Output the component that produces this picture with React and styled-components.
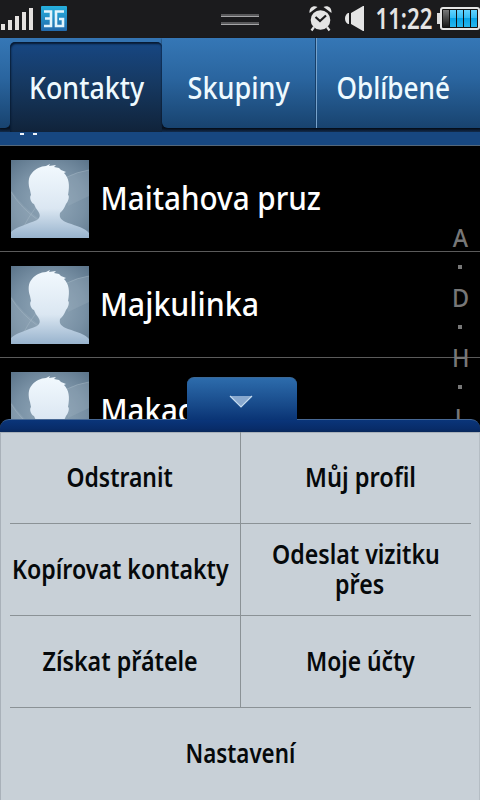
import React, { useLayoutEffect, useRef, useState } from "react";
import styled, { createGlobalStyle } from "styled-components";

const Global = createGlobalStyle`
  *, *::before, *::after { box-sizing: border-box; }
  html, body { margin: 0; padding: 0; background: #000; overflow: hidden; }
  body { font-family: "Noto Sans", "Open Sans", sans-serif; }
`;

const Screen = styled.main`
  position: relative;
  width: 480px;
  height: 800px;
  overflow: hidden;
  background: #000;
  display: flex;
  flex-direction: column;
`;

/* Condensed label: squeezes its glyphs to a given line width. */
const FitBox = styled.span`
  display: flex;
  justify-content: center;
  flex: none;
  width: ${(p) => p.$w}px;
  margin-right: ${(p) => p.$after || 0}px;
  white-space: nowrap;
`;
const FitText = styled.span`
  display: block;
  flex: none;
  transform-origin: center;
`;

function Fit({ w, after, children }) {
  const ref = useRef(null);
  const [scale, setScale] = useState(1);
  useLayoutEffect(() => {
    setScale(w / ref.current.offsetWidth);
  }, [w, children]);
  return (
    <FitBox $w={w} $after={after}>
      <FitText ref={ref} style={{ transform: `scaleX(${scale})` }}>
        {children}
      </FitText>
    </FitBox>
  );
}

const StatusBar = styled.header`
  flex: none;
  height: 38px;
  background: #1b1b1d;
  color: #e4e4e4;
  display: grid;
  grid-template-columns: 221px 38px 1fr;
`;
const StatusLeft = styled.div`
  display: flex;
  gap: 8px;
  padding: 6px 0 0 1px;
`;
const Grip = styled.div`
  margin-top: 14px;
  height: 11px;
  background: linear-gradient(
    #59595b 0 2px, #a5a5a7 2px 3px, #1b1b1d 3px 8px, #59595b 8px 10px, #a5a5a7 10px 11px
  );
`;
const StatusRight = styled.div`
  display: flex;
  padding-left: 50px;
`;
const AlarmIcon = styled.svg`
  flex: none;
  margin-top: 5px;
`;
const SpeakerIcon = styled.svg`
  flex: none;
  margin: 5px 0 0 12px;
`;
const BatteryIcon = styled.svg`
  flex: none;
  margin: 6px 0 0 5px;
`;
const Clock = styled.time`
  margin-left: 10px;
  width: 57px;
  font-size: 28px;
  font-weight: 600;
  line-height: 37px;
`;

const Tabs = styled.nav`
  flex: none;
  height: 94px;
  display: flex;
  align-items: flex-start;
  background: linear-gradient(#163f72 0, #091a30 88px, #071220 90px, #122b4b 94px);
  color: #eefaff;
  font-size: 31px;
  font-weight: 500;
`;
const tabBlue = "linear-gradient(#3577b6, #2a659f 45%, #18436f)";
const TabEdge = styled.div`
  width: 10px;
  height: 90px;
  background: ${tabBlue};
  border-radius: 0 0 5px 0;
  box-shadow: 1px 1px 2px #06101d;
`;
const ActiveTab = styled.div`
  width: 152px;
  height: 94px;
  padding: 4px 0 0;
  background: #3474b2;
`;
const ActiveFace = styled.div`
  height: 90px;
  display: flex;
  justify-content: center;
  padding-left: 1px;
  border-radius: 5px 5px 0 0;
  background: linear-gradient(#174783, #163962 45%, #10233a);
  box-shadow: inset 1px 2px 2px #071a32;
  line-height: 90px;
`;
const TabGroup = styled.div`
  flex: 1;
  height: 90px;
  display: grid;
  grid-template-columns: 154px 1fr;
  background: ${tabBlue};
  border-radius: 0 0 0 6px;
  box-shadow: 0 1px 2px #050d18;
`;
const Tab = styled.div`
  height: 90px;
  display: flex;
  justify-content: ${(p) => (p.$last ? "flex-start" : "center")};
  padding-left: ${(p) => (p.$last ? "19px" : "0")};
  border-left: ${(p) => (p.$last ? "1px solid #77a3cc" : "0")};
  box-shadow: ${(p) => (p.$last ? "-1px 0 0 #173f69" : "none")};
  line-height: 98px;
`;

/* Section header that has scrolled up under the tabs; only the feet of its letter show. */
const Section = styled.div`
  flex: none;
  height: 14px;
  display: flex;
  gap: 9px;
  padding: 1px 0 0 20px;
  background: #174780;
  border-bottom: 1px solid #546779;
`;
const LetterFoot = styled.i`
  width: 4px;
  height: 2px;
  background: #eef4fa;
`;

const ListArea = styled.section`
  flex: 1;
  min-height: 0;
  display: grid;
  grid-template-columns: 100%;
  grid-auto-rows: 106px;
  align-content: start;
  overflow: hidden;
`;
const Row = styled.div`
  height: 106px;
  display: flex;
  padding: 14px 0 0 11px;
  gap: 11px;
  border-bottom: 1px solid #5b5b5b;
  color: #fff;
  font-size: 33px;
  font-weight: 500;
  line-height: 75px;
`;
const AvatarSvg = styled.svg`
  flex: none;
  width: 78px;
  height: 78px;
`;

const IndexBar = styled.aside`
  position: absolute;
  right: 0;
  top: 222px;
  width: 39px;
  display: flex;
  flex-direction: column;
  align-items: center;
  color: #777;
  font-size: 26px;
  font-weight: 500;
  line-height: 30px;
`;
const Letter = styled.span`
  height: 30px;
  transform: scaleX(0.9);
`;
const Dot = styled.i`
  width: 4px;
  height: 4px;
  margin: 13px 1px 13px 0;
  background: #777;
`;

const Sheet = styled.section`
  position: absolute;
  left: 0;
  top: 377px;
  width: 480px;
  height: 423px;
  display: flex;
  flex-direction: column;
`;
const Handle = styled.button`
  flex: none;
  appearance: none;
  margin: 0 0 0 187px;
  width: 110px;
  height: 43px;
  padding: 0;
  display: flex;
  justify-content: center;
  align-items: flex-start;
  border: 0;
  border-top: 1px solid #3b6997;
  border-radius: 7px 7px 0 0;
  background: linear-gradient(#2d6cac, #174989 65%, #0a3475);
  z-index: 1;
`;
const HandleIcon = styled.svg`
  margin: 17px 3px 0 0;
`;
const SheetEdge = styled.div`
  flex: none;
  margin-top: -1px;
  height: 13px;
  border-top: 1px solid #476894;
  border-radius: 9px 9px 0 0;
  background: linear-gradient(#0a357a, #082c69 75%, #09285a);
`;
const Menu = styled.div`
  flex: 1;
  display: grid;
  grid-template-columns: 230px 231px;
  grid-template-rows: 92px 92px 92px 92px;
  padding: 0 9px 0 10px;
  background: #c8d0d7;
  box-shadow: inset 1px 1px 0 #a9b1b9, inset -1px 0 0 #b5bdc4;
  color: #06090b;
  font-size: 27px;
  font-weight: 600;
  line-height: 30px;
`;
const MenuItem = styled.div`
  display: flex;
  flex-direction: column;
  align-items: center;
  justify-content: center;
  border-bottom: ${(p) => (p.$wide ? "0" : "1px solid #8b9296")};
  border-left: ${(p) => (p.$right ? "1px solid #8b9296" : "0")};
  grid-column: ${(p) => (p.$wide ? "1 / -1" : "auto")};
  padding: ${(p) => (p.$wide ? "0 1px 2px 0" : p.$right ? "0 0 2px 8px" : "0 10px 2px 0")};
`;

function Avatar() {
  return (
    <AvatarSvg viewBox="0 0 78 78">
      <defs>
        <radialGradient id="sky" cx="50%" cy="55%" r="75%">
          <stop offset="0" stopColor="#93a9ba" />
          <stop offset="0.6" stopColor="#7890a4" />
          <stop offset="1" stopColor="#5a7389" />
        </radialGradient>
        <linearGradient id="person" x1="0" y1="0" x2="0" y2="1">
          <stop offset="0" stopColor="#f2f9fe" />
          <stop offset="0.6" stopColor="#dbe7f2" />
          <stop offset="1" stopColor="#98b3cd" />
        </linearGradient>
      </defs>
      <rect width="78" height="78" fill="url(#sky)" />
      <path d="M0 30Q10 46 30 60L18 78H0ZM78 10Q66 11 54 18L57 46L78 36Z" fill="#a1b4c3" opacity=".28" />
      <path d="M0 32Q10 48 27 60M78 10Q66 12 56 17M25 47Q17 58 13 66" fill="none" stroke="#acbecb" strokeWidth=".8" opacity=".5" />
      <path
        d="M0 72C5 67 17 64 26 60C30 57 29 54 27 51C25 49 24 46 23 44C20 43 18 37 20 35L19 30C17 24 17 17 21 13C24 9 30 6 35 6L39 4L38 6L45 5L43 7L48 8L50 10L55 12L53 13C58 18 59 25 57 35C59 36 57 42 55 44C53 49 51 51 49 53C48 58 50 60 57 63C66 66 74 68 78 73V78H0Z"
        fill="url(#person)"
      />
    </AvatarSvg>
  );
}

function Alarm() {
  return (
    <AlarmIcon width="24" height="27" viewBox="0 0 24 27">
      <circle cx="11.500" cy="15" r="9.800" fill="#e4e4e4" />
      <path d="M0.500 8C0 3 4 0 8.500 2ZM22.500 8C23 3 19 0 14.500 2Z" fill="#e4e4e4" />
      <path d="M5 22L2.500 25.500M18 22L20.500 25.500" stroke="#e4e4e4" strokeWidth="2.2" />
      <path d="M6.500 12L11 16L17 10.500" fill="none" stroke="#1b1b1d" strokeWidth="2.2" />
    </AlarmIcon>
  );
}

const contacts = [
  { name: "Maitahova pruz", w: 221 },
  { name: "Majkulinka", w: 159 },
  { name: "Makac", w: 92 },
];

export default function App() {
  return (
    <>
      <Global />
      <Screen>
        <StatusBar>
          <StatusLeft>
            <svg width="32" height="26" viewBox="0 0 32 26" fill="#e4e1df">
              <rect x="0" y="18" width="4" height="6" />
              <rect x="7" y="14" width="4" height="10" />
              <rect x="14" y="10" width="4" height="14" />
              <rect x="21" y="6" width="4" height="18" />
              <rect x="28" y="2" width="4" height="22" />
            </svg>
            <svg width="26" height="26" viewBox="0 0 26 26">
              <defs>
                <linearGradient id="net" x1="0" y1="0" x2="0" y2="1">
                  <stop offset="0" stopColor="#25afdd" />
                  <stop offset="1" stopColor="#2369ab" />
                </linearGradient>
              </defs>
              <rect width="26" height="25" rx="1" fill="url(#net)" />
              <path d="M3 5.500H10V20H3M4 12.500H10M23 5.500H15V20H22V13H18" fill="none" stroke="#e2f3fb" strokeWidth="2.6" />
            </svg>
          </StatusLeft>
          <Grip />
          <StatusRight>
            <Alarm />
            <SpeakerIcon width="20" height="27" viewBox="0 0 20 27" fill="#e4e4e4">
              <path d="M4 8H3Q0 10 0 13.500Q0 17 3 19H4ZM6 8L18 1H19V26H18L6 19Z" />
            </SpeakerIcon>
            <Clock>
              <Fit w={57}>11:22</Fit>
            </Clock>
            <BatteryIcon width="43" height="25" viewBox="0 0 43 25">
              <defs>
                <linearGradient id="cell" x1="0" y1="0" x2="0" y2="1">
                  <stop offset="0" stopColor="#62d3ff" />
                  <stop offset="0.45" stopColor="#35bdf5" />
                  <stop offset="0.5" stopColor="#08a4e8" />
                  <stop offset="1" stopColor="#24b6ee" />
                </linearGradient>
                <linearGradient id="empty" x1="0" y1="0" x2="0" y2="1">
                  <stop offset="0" stopColor="#777" />
                  <stop offset="1" stopColor="#161616" />
                </linearGradient>
              </defs>
              <path d="M0 7H4V18H0Z" fill="#ddd" />
              <rect x="4" y="2" width="38" height="21" rx="2" fill="#111" stroke="#e5e5e5" strokeWidth="2" />
              <rect x="6" y="4" width="6" height="17" fill="url(#empty)" />
              <path d="M13 4H19V21H13ZM20 4H26V21H20ZM27 4H33V21H27ZM34 4H40V21H34Z" fill="url(#cell)" />
            </BatteryIcon>
          </StatusRight>
        </StatusBar>
        <Tabs>
          <TabEdge />
          <ActiveTab>
            <ActiveFace>
              <Fit w={115}>Kontakty</Fit>
            </ActiveFace>
          </ActiveTab>
          <TabGroup>
            <Tab>
              <Fit w={102}>Skupiny</Fit>
            </Tab>
            <Tab $last>
              <Fit w={114}>Oblíbené</Fit>
            </Tab>
          </TabGroup>
        </Tabs>
        <Section>
          <LetterFoot />
          <LetterFoot />
        </Section>
        <ListArea>
          {contacts.map((c) => (
            <Row key={c.name}>
              <Avatar />
              <Fit w={c.w}>{c.name}</Fit>
            </Row>
          ))}
        </ListArea>
        <IndexBar>
          <Letter>A</Letter>
          <Dot />
          <Letter>D</Letter>
          <Dot />
          <Letter>H</Letter>
          <Dot />
          <Letter>L</Letter>
        </IndexBar>
        <Sheet>
          <Handle aria-label="▼">
            <HandleIcon width="24" height="14" viewBox="0 0 24 14">
              <path d="M1 1H23L12 12Z" fill="#89a9cf" />
              <path d="M1 1L12 12L23 1" fill="none" stroke="#c6dcef" strokeWidth="1.2" />
            </HandleIcon>
          </Handle>
          <SheetEdge />
          <Menu>
            <MenuItem>
              <Fit w={106}>Odstranit</Fit>
            </MenuItem>
            <MenuItem $right>
              <Fit w={111}>Můj profil</Fit>
            </MenuItem>
            <MenuItem>
              <Fit w={217}>Kopírovat kontakty</Fit>
            </MenuItem>
            <MenuItem $right>
              <Fit w={168} after={8}>Odeslat vizitku</Fit>
              <Fit w={49}>přes</Fit>
            </MenuItem>
            <MenuItem>
              <Fit w={155}>Získat přátele</Fit>
            </MenuItem>
            <MenuItem $right>
              <Fit w={109}>Moje účty</Fit>
            </MenuItem>
            <MenuItem $wide>
              <Fit w={110}>Nastavení</Fit>
            </MenuItem>
          </Menu>
        </Sheet>
      </Screen>
    </>
  );
}
